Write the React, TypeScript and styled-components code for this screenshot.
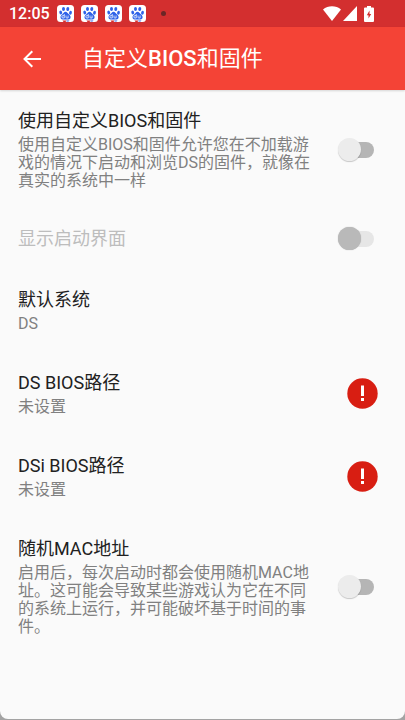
import React, { useId, useState } from 'react';
import styled, { createGlobalStyle, css } from 'styled-components';

const GlobalStyle = createGlobalStyle`
  * { box-sizing: border-box; }
  body {
    margin: 0;
    background: #a3a3a3;
    font-family: Roboto, "Noto Sans CJK SC", sans-serif;
  }
`;

const Screen = styled.div`
  display: flex;
  flex-direction: column;
  min-height: calc(100vh - 1px);
  background: #fafafa;
  border-radius: 0 0 8px 8px;
  overflow: hidden;
`;

const StatusBar = styled.div`
  display: flex;
  align-items: center;
  justify-content: space-between;
  height: 27px;
  padding: 0 31px 0 9px;
  background: #d32f2f;
  color: #fff;
`;

const StatusGroup = styled.div<{ $gap: number }>`
  display: flex;
  align-items: center;
  gap: ${(p) => p.$gap}px;
`;

const Clock = styled.time`
  font-size: 16px;
  line-height: 20px;
  font-weight: 500;
`;

const NoticeDot = styled.span`
  width: 5px;
  height: 5px;
  margin-left: 8px;
  border-radius: 50%;
  background: #6b2626;
`;

const AppBar = styled.header`
  display: flex;
  align-items: center;
  gap: 36px;
  height: 63px;
  padding: 0 18px;
  background: #f44336;
  color: #fff;
  box-shadow: 0 1px 2px rgba(0, 0, 0, 0.15);
`;

const BackButton = styled.button`
  display: flex;
  align-items: center;
  justify-content: center;
  width: 28px;
  height: 40px;
  padding: 0;
  border: 0;
  background: none;
  color: inherit;
  cursor: pointer;
`;

const Title = styled.h1`
  margin: 0;
  font-size: 22px;
  line-height: 30px;
  font-weight: 400;
`;

const Latin = styled.span`
  font-weight: 500;
`;

const List = styled.main`
  display: flex;
  flex-direction: column;
`;

const rowLayout = css`
  display: flex;
  align-items: center;
  gap: 16px;
  width: 100%;
  color: #212121;
  text-align: left;
`;

const SwitchRow = styled.label<{ $compact?: boolean; $disabled?: boolean }>`
  ${rowLayout}
  padding: ${(p) => (p.$compact ? 18 : 19)}px 27px ${(p) => (p.$compact ? 18 : 19)}px 18px;
  cursor: ${(p) => (p.$disabled ? 'default' : 'pointer')};
  ${(p) => p.$disabled && 'color: #bdbdbd;'}
`;

const ButtonRow = styled.button`
  ${rowLayout}
  padding: 19px 27px 19px 18px;
  border: 0;
  background: none;
  font-family: inherit;
  cursor: pointer;
`;

const RowText = styled.span`
  display: flex;
  flex: 1;
  flex-direction: column;
  gap: 3px;
  min-width: 0;
`;

const RowTitle = styled.span`
  font-size: 18px;
  line-height: 24px;
`;

const Summary = styled.span`
  color: #808080;
  font-size: 16px;
  line-height: 18px;
`;

const Control = styled.span`
  display: flex;
  flex: none;
  justify-content: flex-end;
  width: 48px;
`;

const Toggle = styled.input`
  appearance: none;
  position: relative;
  width: 36px;
  height: 24px;
  margin: 0 4px 0 0;
  cursor: inherit;

  &::before {
    content: '';
    position: absolute;
    inset: 4px 0 4px 3px;
    border-radius: 8px;
    background: #b5b5b5;
  }

  &::after {
    content: '';
    position: absolute;
    top: 0;
    left: 0;
    width: 23px;
    height: 23px;
    border-radius: 50%;
    background: #ececec;
    box-shadow: 0 1px 1px rgba(0, 0, 0, 0.2);
  }

  &:checked::before { background: #f9a19a; }
  &:checked::after { left: 13px; background: #f44336; }
  &:disabled::before { background: #e6e6e6; }
  &:disabled::after { background: #b9b9b9; box-shadow: 0 0 1px #aaa; }
`;

function PawBadge() {
  return (
    <svg width="17" height="17" viewBox="0 0 34 34" aria-hidden="true">
      <rect width="34" height="34" rx="7" fill="#fff" />
      <g fill="#2f62e8">
        <ellipse cx="13" cy="8" rx="3" ry="4.2" />
        <ellipse cx="21.5" cy="8" rx="3" ry="4.2" transform="rotate(10 21.5 8)" />
        <ellipse cx="7.5" cy="15" rx="2.8" ry="3.9" transform="rotate(-18 7.5 15)" />
        <ellipse cx="27" cy="15.5" rx="2.8" ry="3.9" transform="rotate(12 27 15.5)" />
        <path d="M17 13.5c3.2 0 4.4 3 6.700 5.200 2.600 2.400 4.100 4.300 3.300 7.200-1 3.500-5 3.400-10 3.100-5 .3-8.700.4-9.800-3.100-.9-3 1-4.900 3.500-7.200 2.200-2.100 3.100-5.200 6.300-5.200z" />
      </g>
      <path d="M14.5 18v8h-2.500a2.300 2.300 0 0 1 0-4.800h2.500M18 21v3.500q0 1.500 1.600 1.500h2.600v-5" fill="none" stroke="#fff" strokeWidth="1.5" />
      <path d="M11 31h8l-2 3h-4z" fill="#d32f2f" />
      <path d="M19 31h6l-2 2h-4z" fill="#2f62e8" />
    </svg>
  );
}

function WifiIcon() {
  return (
    <svg width="18" height="15" viewBox="0 0 18 15" aria-hidden="true">
      <path d="M0 3.5C5 -.7 13 -.7 18 3.5L9 15z" fill="#fff" />
    </svg>
  );
}

function SignalIcon() {
  return (
    <svg width="14" height="15" viewBox="0 0 14 15" aria-hidden="true">
      <path d="M14 0v15H0z" fill="#fff" />
    </svg>
  );
}

function BatteryIcon() {
  return (
    <svg width="10" height="16" viewBox="0 0 10 16" aria-hidden="true">
      <path d="M3 0h4v1.500h2q1 0 1 1V15q0 1-1 1H1q-1 0-1-1V2.500q0-1 1-1h2z" fill="#fff" />
      <path d="M5.500 4.500v3.500H7.200l-2.700 4.500V9.300H2.800z" fill="#d32f2f" />
    </svg>
  );
}

function BackArrow() {
  return (
    <svg width="18" height="18" viewBox="0 0 18 18" fill="none" stroke="#fff" strokeWidth="2" aria-hidden="true">
      <path d="M18 9H1.500M9.300 1.200L1.500 9l7.800 7.800" />
    </svg>
  );
}

function AlertIcon() {
  return (
    <svg width="31" height="31" viewBox="0 0 31 31" role="img" aria-label="!">
      <circle cx="15.500" cy="15.500" r="15.200" fill="#d81e12" />
      <path d="M14 7.500h3v10.500h-3zM14 20h3v3h-3z" fill="#fff" />
    </svg>
  );
}

interface SwitchSettingProps {
  title: string;
  summary?: string;
  disabled?: boolean;
}

function SwitchSetting({ title, summary, disabled = false }: SwitchSettingProps) {
  const id = useId();
  const [checked, setChecked] = useState(false);
  return (
    <SwitchRow htmlFor={id} $compact={!summary} $disabled={disabled}>
      <RowText>
        <RowTitle>{title}</RowTitle>
        {summary && <Summary>{summary}</Summary>}
      </RowText>
      <Control>
        <Toggle
          id={id}
          type="checkbox"
          role="switch"
          checked={checked}
          disabled={disabled}
          onChange={(e) => setChecked(e.target.checked)}
        />
      </Control>
    </SwitchRow>
  );
}

function ButtonSetting({ title, summary, alert }: { title: string; summary: string; alert?: boolean }) {
  return (
    <ButtonRow type="button">
      <RowText>
        <RowTitle>{title}</RowTitle>
        <Summary>{summary}</Summary>
      </RowText>
      {alert && <Control><AlertIcon /></Control>}
    </ButtonRow>
  );
}

export default function App() {
  return (
    <>
      <GlobalStyle />
      <Screen>
        <StatusBar>
          <StatusGroup $gap={7}>
            <Clock>12:05</Clock>
            <PawBadge />
            <PawBadge />
            <PawBadge />
            <PawBadge />
            <NoticeDot />
          </StatusGroup>
          <StatusGroup $gap={7}>
            <StatusGroup $gap={2}>
              <WifiIcon />
              <SignalIcon />
            </StatusGroup>
            <BatteryIcon />
          </StatusGroup>
        </StatusBar>
        <AppBar>
          <BackButton type="button" aria-label="返回">
            <BackArrow />
          </BackButton>
          <Title>自定义<Latin>BIOS</Latin>和固件</Title>
        </AppBar>
        <List>
          <SwitchSetting
            title="使用自定义BIOS和固件"
            summary="使用自定义BIOS和固件允许您在不加载游戏的情况下启动和浏览DS的固件，就像在真实的系统中一样"
          />
          <SwitchSetting title="显示启动界面" disabled />
          <ButtonSetting title="默认系统" summary="DS" />
          <ButtonSetting title="DS BIOS路径" summary="未设置" alert />
          <ButtonSetting title="DSi BIOS路径" summary="未设置" alert />
          <SwitchSetting
            title="随机MAC地址"
            summary="启用后，每次启动时都会使用随机MAC地址。这可能会导致某些游戏认为它在不同的系统上运行，并可能破坏基于时间的事件。"
          />
        </List>
      </Screen>
    </>
  );
}
